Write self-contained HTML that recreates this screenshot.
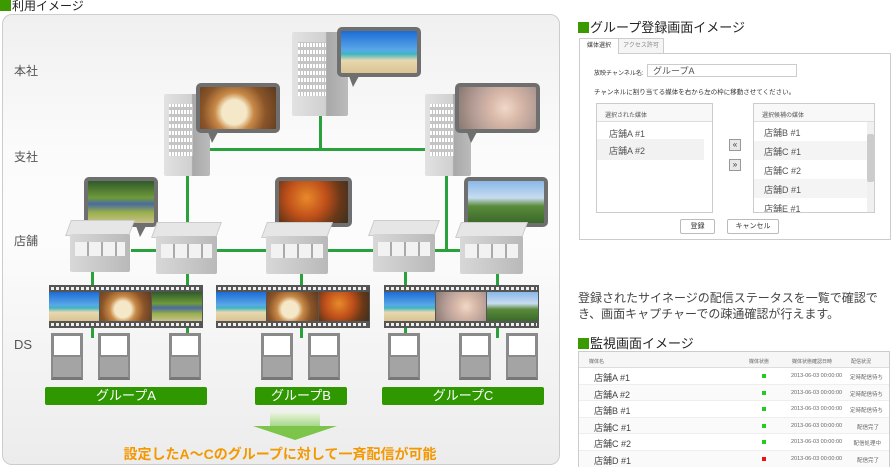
<!DOCTYPE html><html><head><meta charset="utf-8"><style>
*{margin:0;padding:0;box-sizing:border-box}
body{width:896px;height:468px;background:#fff;font-family:"Liberation Sans","Noto Sans CJK JP",sans-serif;position:relative;overflow:hidden;color:#333}
.a{position:absolute;white-space:nowrap}
.sq{display:inline-block;width:11px;height:11px;background:#3a9a00;margin-right:1px;vertical-align:-1px}
.g{background:#2aa23c;position:absolute}
.bld{position:absolute;background:linear-gradient(90deg,#e2e2e2,#d0d0d0 60%,#a8a8a8 62%,#bbb);border-radius:2px}
.win{position:absolute;background:repeating-linear-gradient(90deg,transparent 0 2px,#c4c4c4 2px 3px),repeating-linear-gradient(0deg,#fff 0 4px,#c4c4c4 4px 7px)}
.bub{position:absolute;background:#6f6f6f;border-radius:5px;padding:4px}
.bub i{display:block;width:100%;height:100%;border-radius:1px}
.bub b{position:absolute;bottom:-10px;left:12px;border-left:4px solid transparent;border-right:6px solid transparent;border-top:11px solid #6f6f6f}
.store{position:absolute;height:52px}
.store .t{position:absolute;left:0;right:0;top:0;height:16px;background:#e6e6e6;transform:skewX(-20deg);border:1px solid #ccc}
.store .f{position:absolute;left:2px;right:2px;top:14px;bottom:0;background:linear-gradient(90deg,#d8d8d8,#b9b9b9);border-radius:2px}
.store .f:after{content:"";position:absolute;left:5px;right:5px;top:8px;height:14px;background:repeating-linear-gradient(90deg,#f2f2f2 0 12px,#aaa 12px 14px)}
.film{position:absolute;height:43px;background:#555;padding:7px 0}
.film:before,.film:after{content:"";position:absolute;left:2px;right:2px;height:3px;background:repeating-linear-gradient(90deg,#eee 0 3px,transparent 3px 5px)}
.film:before{top:2px}.film:after{bottom:2px}
.film i{float:left;width:33.33%;height:29px;border-right:1px solid #555}
.ds{position:absolute;width:38px;height:49px}
.ds:before{content:"";position:absolute;left:3px;right:3px;top:0;height:22px;background:#fff;border:3px solid #8a8a8a}
.ds:after{content:"";position:absolute;left:3px;right:3px;top:22px;bottom:2px;background:#a4a4a4;border:2px solid #8a8a8a;border-bottom:3px solid #777}
.grp{position:absolute;top:387px;height:18px;background:#2f9800;color:#fff;font-size:13px;text-align:center;line-height:18px;border-radius:2px}
.lbl{position:absolute;left:14px;font-size:12px;color:#555}
.p1{background:linear-gradient(180deg,#1c6cd6 0,#5aa7e8 45%,#3fb6c0 55%,#e8d8b0 70%,#d9c393)}
.p2{background:radial-gradient(circle at 45% 60%,#f4e8c8 0 25%,#c98a48 40%,#8a5428 65%,#5a3a20)}
.p3{background:linear-gradient(180deg,#2f5a2a 0,#6f9a3a 40%,#4a6aa0 55%,#9ab048 75%,#c8c090)}
.p4{background:radial-gradient(circle at 40% 40%,#e88a2a 0,#c0501a 40%,#6a3818 70%,#3a3020)}
.p5{background:radial-gradient(circle at 60% 50%,#f0d8c8 0,#d8b8a8 30%,#b8a098 60%,#8a7870)}
.p6{background:linear-gradient(180deg,#8ab8e8 0,#c8dcf0 40%,#5a8a3a 60%,#3a6a2a)}
.tbl{font-size:7px;color:#666}
.r{height:16.5px;position:relative;border-bottom:1px solid #eee}
.r .n{left:15px;top:3px;font-size:9px;color:#444}
.r .d{left:183px;top:6px;width:4px;height:4px;background:#2c2}
.r .t{left:212px;top:5px;font-size:5.5px}
.r .s{right:6px;top:5px;font-size:5.5px}
</style></head><body>
<div class="a" style="left:0;top:0;font-size:12px;color:#222;line-height:12px"><span class="sq"></span>利用イメージ</div>
<div class="a" style="left:2px;top:14px;width:558px;height:451px;border:1px solid #ccc;border-radius:10px;background:linear-gradient(180deg,#f0f0f0,#fbfbfb 30%,#fcfcfc 50%,#ececec)"></div>
<div class="lbl" style="top:62px">本社</div><div class="lbl" style="top:148px">支社</div><div class="lbl" style="top:232px">店舗</div><div class="lbl" style="top:337px;font-size:13px">DS</div>
<div class="g" style="left:208px;top:148px;width:218px;height:3px"></div>
<div class="g" style="left:319px;top:116px;width:3px;height:34px"></div>
<div class="g" style="left:186px;top:176px;width:3px;height:48px"></div>
<div class="g" style="left:445px;top:176px;width:3px;height:76px"></div>
<div class="g" style="left:131px;top:249px;width:330px;height:3px"></div>
<div class="g" style="left:91px;top:270px;width:3px;height:68px"></div>
<div class="g" style="left:186px;top:224px;width:3px;height:114px"></div>
<div class="g" style="left:300px;top:270px;width:3px;height:68px"></div>
<div class="g" style="left:404px;top:270px;width:3px;height:68px"></div>
<div class="g" style="left:496px;top:270px;width:3px;height:68px"></div>
<div class="bld" style="left:292px;top:32px;width:56px;height:84px"><div class="win" style="left:6px;top:10px;width:28px;height:54px"></div></div>
<div class="bld" style="left:164px;top:94px;width:46px;height:82px"><div class="win" style="left:5px;top:10px;width:24px;height:52px"></div></div>
<div class="bld" style="left:425px;top:94px;width:46px;height:82px"><div class="win" style="left:5px;top:10px;width:24px;height:52px"></div></div>
<div class="bub" style="left:337px;top:27px;width:84px;height:50px"><i class="p1"></i><b></b></div>
<div class="bub" style="left:196px;top:83px;width:84px;height:50px"><i class="p2"></i><b></b></div>
<div class="bub" style="left:455px;top:83px;width:85px;height:50px"><i class="p5"></i><b></b></div>
<div class="bub" style="left:84px;top:177px;width:74px;height:50px"><i class="p3"></i><b style="left:auto;right:12px"></b></div>
<div class="bub" style="left:275px;top:177px;width:77px;height:50px"><i class="p4"></i><b></b></div>
<div class="bub" style="left:464px;top:177px;width:84px;height:50px"><i class="p6"></i><b></b></div>
<div class="store" style="left:68px;top:220px;width:64px"><div class="t"></div><div class="f"></div></div>
<div class="store" style="left:154px;top:222px;width:65px"><div class="t"></div><div class="f"></div></div>
<div class="store" style="left:264px;top:222px;width:66px"><div class="t"></div><div class="f"></div></div>
<div class="store" style="left:371px;top:220px;width:66px"><div class="t"></div><div class="f"></div></div>
<div class="store" style="left:458px;top:222px;width:67px"><div class="t"></div><div class="f"></div></div>
<div class="film" style="left:49px;top:285px;width:154px"><i class="p1"></i><i class="p2"></i><i class="p3"></i></div>
<div class="film" style="left:216px;top:285px;width:154px"><i class="p1"></i><i class="p2"></i><i class="p4"></i></div>
<div class="film" style="left:384px;top:285px;width:155px"><i class="p1"></i><i class="p5"></i><i class="p6"></i></div>
<div class="ds" style="left:48px;top:333px"></div><div class="ds" style="left:95px;top:333px"></div><div class="ds" style="left:166px;top:333px"></div>
<div class="ds" style="left:258px;top:333px"></div><div class="ds" style="left:305px;top:333px"></div>
<div class="ds" style="left:385px;top:333px"></div><div class="ds" style="left:456px;top:333px"></div><div class="ds" style="left:503px;top:333px"></div>
<div class="grp" style="left:45px;width:162px">グループA</div>
<div class="grp" style="left:255px;width:92px">グループB</div>
<div class="grp" style="left:382px;width:162px">グループC</div>
<div class="a" style="left:270px;top:413px;width:50px;height:13px;background:linear-gradient(180deg,#e8f4dc,#a8d88a)"></div>
<div class="a" style="left:253px;top:426px;width:0;height:0;border-left:42px solid transparent;border-right:42px solid transparent;border-top:14px solid #7cc44a"></div>
<div class="a" style="left:0;width:560px;top:444px;text-align:center;font-size:14px;font-weight:bold;color:#f39800">設定したA～Cのグループに対して一斉配信が可能</div>

<div class="a" style="left:578px;top:17px;font-size:13px;color:#222"><span class="sq"></span>グループ登録画面イメージ</div>
<div class="a" style="left:579px;top:38px;width:40px;height:16px;border:1px solid #ccc;border-bottom:none;background:#fff;font-size:6px;line-height:15px;text-align:center;z-index:2">媒体選択</div>
<div class="a" style="left:618px;top:38px;width:46px;height:16px;border:1px solid #ccc;background:#f5f5f5;font-size:6px;line-height:15px;text-align:center;color:#888">アクセス許可</div>
<div class="a" style="left:579px;top:53px;width:312px;height:187px;border:1px solid #ccc;background:#fff"></div>
<div class="a" style="left:594px;top:68px;font-size:6px">放映チャンネル名:</div>
<div class="a" style="left:647px;top:64px;width:150px;height:13px;border:1px solid #ccc;font-size:9px;padding-left:5px;line-height:12px;color:#555">グループA</div>
<div class="a" style="left:594px;top:86px;font-size:6.5px">チャンネルに割り当てる媒体を右から左の枠に移動させてください。</div>
<div class="a" style="left:596px;top:103px;width:117px;height:110px;border:1px solid #ccc;font-size:9px;color:#555">
<div style="height:18px;border-bottom:1px solid #ddd;background:#f8f8f8;font-size:6px;padding:6px 8px">選択された媒体</div>
<div style="padding:5px 12px;height:17px">店舗A #1</div><div style="padding:5px 12px;height:21px;background:#f2f2f2;margin-right:8px">店舗A #2</div></div>
<div class="a" style="left:729px;top:139px;width:12px;height:12px;border:1px solid #999;background:#e8e8e8;font-size:8px;text-align:center;line-height:10px">«</div>
<div class="a" style="left:729px;top:159px;width:12px;height:12px;border:1px solid #999;background:#e8e8e8;font-size:8px;text-align:center;line-height:10px">»</div>
<div class="a" style="left:753px;top:103px;width:122px;height:110px;border:1px solid #ccc;font-size:9px;color:#555;overflow:hidden">
<div style="height:18px;border-bottom:1px solid #ddd;background:#f8f8f8;font-size:6px;padding:6px 8px">選択候補の媒体</div>
<div style="padding:4px 10px;height:19px">店舗B #1</div><div style="padding:4px 10px;height:19px;background:#f4f4f4">店舗C #1</div><div style="padding:4px 10px;height:19px">店舗C #2</div><div style="padding:4px 10px;height:19px;background:#f4f4f4">店舗D #1</div><div style="padding:4px 10px;height:19px">店舗E #1</div>
<div style="position:absolute;right:0;top:18px;width:7px;bottom:0;background:#f0f0f0"><div style="margin-top:12px;height:48px;background:#ccc;border-radius:2px"></div></div></div>
<div class="a" style="left:680px;top:219px;width:35px;height:15px;border:1px solid #bbb;border-radius:2px;font-size:7px;text-align:center;line-height:13px">登録</div>
<div class="a" style="left:727px;top:219px;width:52px;height:15px;border:1px solid #bbb;border-radius:2px;font-size:7px;text-align:center;line-height:13px">キャンセル</div>
<div class="a" style="left:578px;top:290px;width:318px;font-size:12px;line-height:16px;color:#444;white-space:normal">登録されたサイネージの配信ステータスを一覧で確認でき、画面キャプチャーでの疎通確認が行えます。</div>
<div class="a" style="left:578px;top:333px;font-size:13px;color:#222"><span class="sq"></span>監視画面イメージ</div>
<div class="a tbl" style="left:578px;top:351px;width:312px;height:116px;border:1px solid #ccc;background:#fff">
<div style="height:16px;background:#f6f6f6;border-bottom:1px solid #ddd;position:relative;font-size:5px"><span class="a" style="left:10px;top:6px">媒体名</span><span class="a" style="left:170px;top:6px">媒体状態</span><span class="a" style="left:213px;top:6px">媒体状態確認日時</span><span class="a" style="left:272px;top:6px">配信状況</span></div>
<div class="r"><span class="a n">店舗A #1</span><span class="a d"></span><span class="a t">2013-06-03 00:00:00</span><span class="a s">定時配信待ち</span></div>
<div class="r" style="background:#fafafa"><span class="a n">店舗A #2</span><span class="a d"></span><span class="a t">2013-06-03 00:00:00</span><span class="a s">定時配信待ち</span></div>
<div class="r"><span class="a n">店舗B #1</span><span class="a d"></span><span class="a t">2013-06-03 00:00:00</span><span class="a s">定時配信待ち</span></div>
<div class="r" style="background:#fafafa"><span class="a n">店舗C #1</span><span class="a d"></span><span class="a t">2013-06-03 00:00:00</span><span class="a s" style="right:10px">配信完了</span></div>
<div class="r"><span class="a n">店舗C #2</span><span class="a d"></span><span class="a t">2013-06-03 00:00:00</span><span class="a s" style="right:8px">配信処理中</span></div>
<div class="r" style="background:#fafafa;border:none"><span class="a n">店舗D #1</span><span class="a d" style="background:#e11"></span><span class="a t">2013-06-03 00:00:00</span><span class="a s" style="right:10px">配信完了</span></div>
</div>
</body></html>
